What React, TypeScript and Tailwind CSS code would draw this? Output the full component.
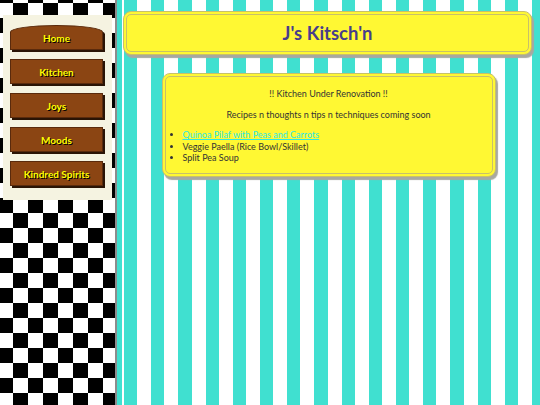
import React from "react";

const navItems = ["Home", "Kitchen", "Joys", "Moods", "Kindred Spirits"];

export default function App() {
  return (
    <div className="flex h-[405px] w-[540px] overflow-hidden font-['Comic_Sans_MS','Lato',sans-serif]">
      <aside className="w-[117px] shrink-0 border-r-2 border-[#8c8c8c] bg-[image:conic-gradient(#000_25%,#fff_0_50%,#000_0_75%,#fff_0)] bg-[size:30px_30px] bg-[position:-2px_3px] pt-[15px] px-[3px]">
        <nav className="bg-[#f5f3e1] pt-[10px] pb-[14px] pl-[7px] pr-[9px] flex flex-col gap-[9px]">
          {navItems.map((item, i) => (
            <a
              key={item}
              className={
                "flex h-[25px] items-center justify-center border border-[#5a2a0c] bg-[#8b4513] shadow-[2px_2px_0_#2a1405] text-[10px] font-bold leading-none text-[#ffff00] [text-shadow:1px_1px_0_#000] " +
                (i === 0 ? "rounded-tl-[50%_7px] rounded-tr-[50%_7px]" : "")
              }
            >
              {item}
            </a>
          ))}
        </nav>
      </aside>
      <main className="flex-1 bg-[image:repeating-linear-gradient(90deg,#40e0d0_0_13.2px,#fff_13.2px_27.2px)] bg-[position:7px_0] pt-[11px]">
        <header className="ml-[6px] mr-[8px] flex h-[44px] items-center justify-center rounded-[8px] border-4 border-double border-[#c8c06a] bg-[#fff833] shadow-[2px_3px_1px_#a8a8a0]">
          <h1 className="text-[18.5px] font-bold leading-none text-[#483d8b]">J's Kitsch'n</h1>
        </header>
        <section className="mx-auto mt-[18px] w-[334px] rounded-[8px] border-4 border-double border-[#c8c06a] bg-[#fff833] shadow-[2px_3px_1px_#a8a8a0] pt-[11px] pb-[9px] text-[9px] leading-[12px] text-[#333]">
          <p className="text-center">!! Kitchen Under Renovation !!</p>
          <p className="mt-[9px] text-center">Recipes n thoughts n tips n techniques coming soon</p>
          <ul className="mt-[8px] list-disc pl-[17px] leading-[11.6px]">
            <li>
              <a className="text-[#2ee8e0] underline">Quinoa Pilaf with Peas and Carrots</a>
            </li>
            <li>Veggie Paella (Rice Bowl/Skillet)</li>
            <li>Split Pea Soup</li>
          </ul>
        </section>
      </main>
    </div>
  );
}
